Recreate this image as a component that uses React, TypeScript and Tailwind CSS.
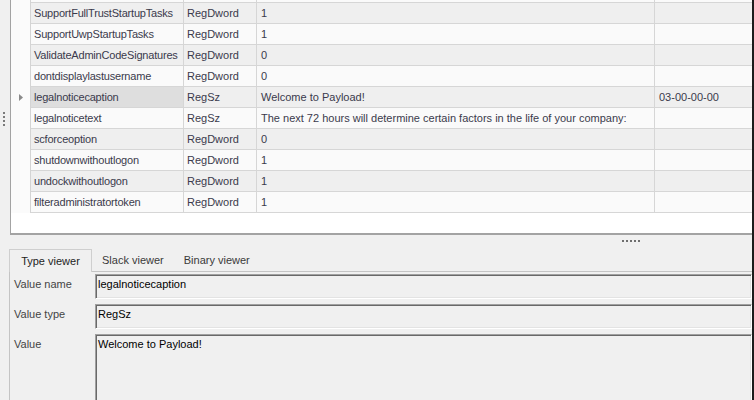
import React from "react";

type Row = { name: string; type: string; value: string; raw: string };

const rows: Row[] = [
  { name: "SupportFullTrustStartupTasks", type: "RegDword", value: "1", raw: "" },
  { name: "SupportUwpStartupTasks", type: "RegDword", value: "1", raw: "" },
  { name: "ValidateAdminCodeSignatures", type: "RegDword", value: "0", raw: "" },
  { name: "dontdisplaylastusername", type: "RegDword", value: "0", raw: "" },
  { name: "legalnoticecaption", type: "RegSz", value: "Welcome to Payload!", raw: "03-00-00-00" },
  { name: "legalnoticetext", type: "RegSz", value: "The next 72 hours will determine certain factors in the life of your company:", raw: "" },
  { name: "scforceoption", type: "RegDword", value: "0", raw: "" },
  { name: "shutdownwithoutlogon", type: "RegDword", value: "1", raw: "" },
  { name: "undockwithoutlogon", type: "RegDword", value: "1", raw: "" },
  { name: "filteradministratortoken", type: "RegDword", value: "1", raw: "" },
];

const SELECTED = 4;

function GridRow({ row, index }: { row: Row | null; index: number }) {
  // index -1 is the row scrolled off the top
  const odd = index % 2 === 0;
  const bg = odd ? "bg-[#efefef]" : "bg-[#fafafa]";
  const selected = index === SELECTED;
  return (
    <div className="flex h-[21px]">
      <div className="w-[20px] shrink-0 border-r border-[#d4d4d4] bg-[#fbfbfb] flex items-center justify-center">
        {selected && (
          <svg width="4" height="7" viewBox="0 0 4 7">
            <path d="M0 0 L4 3.5 L0 7 Z" fill="#8a8a8a" />
          </svg>
        )}
      </div>
      <div
        className={`w-[153px] shrink-0 border-r border-b border-[#d6d6d6] pl-[3px] flex items-center whitespace-nowrap overflow-hidden tracking-[-0.2px] ${
          selected ? "bg-[#dedede]" : bg
        }`}
      >
        {row?.name}
      </div>
      <div className={`w-[73px] shrink-0 border-r border-b border-[#d6d6d6] pl-[3px] flex items-center ${bg}`}>
        {row?.type}
      </div>
      <div className={`w-[398px] shrink-0 border-r border-b border-[#d6d6d6] pl-[4px] flex items-center whitespace-nowrap ${bg}`}>
        {row?.value}
      </div>
      <div className={`flex-1 border-b border-[#d6d6d6] pl-[4px] flex items-center ${bg}`}>{row?.raw}</div>
    </div>
  );
}

function TextBox({ text, tall }: { text: string; tall?: boolean }) {
  return (
    <div
      className={`flex-1 bg-[#f0f0f0] border border-t-[#a0a0a0] border-l-[#a0a0a0] border-b-white border-r-white shadow-[inset_1px_1px_0_#696969,inset_-1px_-1px_0_#e3e3e3] pl-[2px] pt-[3px] text-black leading-[13px] ${
        tall ? "h-[80px]" : "h-[25px]"
      }`}
    >
      {text}
    </div>
  );
}

export default function App() {
  return (
    <div className="w-[754px] h-[400px] overflow-hidden bg-[#f0f0f0] border-r-2 border-[#1c1c1c] flex flex-col text-[11px] text-[#3a3a4c] font-['Liberation_Sans',Arial,sans-serif]">
      <div className="flex h-[235px] shrink-0">
        <div className="w-[10px] shrink-0 pl-[3px] pt-[112px] flex flex-col gap-[2px]">
          {[0, 1, 2, 3].map((i) => (
            <div key={i} className="w-[2px] h-[2px] bg-[#7a7a7a]" />
          ))}
        </div>
        <div className="flex-1 bg-white border-l border-b-2 border-[#a3a3a3] overflow-hidden">
          <div className="-mt-[18px]">
            <GridRow row={null} index={-1} />
            {rows.map((r, i) => (
              <GridRow key={r.name} row={r} index={i} />
            ))}
          </div>
        </div>
      </div>

      <div className="h-[14px] shrink-0 flex justify-end pr-[112px] pt-[5px] gap-[2px]">
        {[0, 1, 2, 3, 4].map((i) => (
          <div key={i} className="w-[2px] h-[2px] bg-[#6e6e6e]" />
        ))}
      </div>

      <div className="flex h-[22px] shrink-0 pl-[9px] relative z-10">
        <div className="w-[83px] h-[23px] border border-b-0 border-[#cfcfcf] bg-[#f0f0f0] flex items-center justify-center text-[#1e1e1e]">
          Type viewer
        </div>
        <div className="px-[10px] flex items-center text-[#3a3a3a]">Slack viewer</div>
        <div className="px-[10px] flex items-center text-[#3a3a3a]">Binary viewer</div>
      </div>

      <div className="flex-1 ml-[9px] border-l border-t border-[#c4c4c4] pt-[2px] flex flex-col gap-[5px]">
        <div className="flex">
          <div className="w-[85px] shrink-0 pl-[4px] pt-[2px] text-[#444]">Value name</div>
          <TextBox text="legalnoticecaption" />
        </div>
        <div className="flex">
          <div className="w-[85px] shrink-0 pl-[4px] pt-[2px] text-[#444]">Value type</div>
          <TextBox text="RegSz" />
        </div>
        <div className="flex">
          <div className="w-[85px] shrink-0 pl-[4px] pt-[2px] text-[#444]">Value</div>
          <TextBox text="Welcome to Payload!" tall />
        </div>
      </div>
    </div>
  );
}
